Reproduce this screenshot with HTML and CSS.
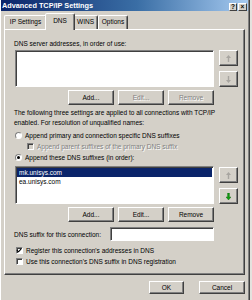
FILE: index.html
```html
<!DOCTYPE html>
<html>
<head>
<meta charset="utf-8">
<link rel="stylesheet" href="styles.css">
</head>
<body>
<div class="window">
  <div class="titlebar">
    <span class="title">Advanced TCP/IP Settings</span>
    <div class="tb-btns">
      <span class="tb-btn help">?</span>
      <span class="tb-btn close">×</span>
    </div>
  </div>

  <div class="tabs">
    <div class="tab t1">IP Settings</div>
    <div class="tab active">DNS</div>
    <div class="tab t3">WINS</div>
    <div class="tab t4">Options</div>
  </div>

  <div class="panel">
    <div class="label l1">DNS server addresses, in order of use:</div>
    <div class="listrow r1">
      <div class="listbox lb1"></div>
      <div class="arrows a1">
        <div class="abtn"><svg class="arrow dis" viewBox="0 0 5 7" width="5" height="7"><path d="M2.5 0 L5 3 H3.2 V7 H1.8 V3 H0 Z"/></svg></div>
        <div class="abtn down"><svg class="arrow dis" viewBox="0 0 5 7" width="5" height="7"><path d="M2.5 7 L5 4 H3.2 V0 H1.8 V4 H0 Z"/></svg></div>
      </div>
    </div>
    <div class="btnrow b1">
      <div class="btn">Add...</div>
      <div class="btn disabled">Edit...</div>
      <div class="btn disabled">Remove</div>
    </div>

    <div class="para">The following three settings are applied to all connections with TCP/IP<br>enabled. For resolution of unqualified names:</div>

    <div class="opt o1"><span class="radio"></span><span>Append primary and connection specific DNS suffixes</span></div>
    <div class="opt o2 disabled"><span class="check dis"></span><span>Append parent suffixes of the primary DNS suffix</span></div>
    <div class="opt o3"><span class="radio on"></span><span>Append these DNS suffixes (in order):</span></div>

    <div class="listrow r2">
      <div class="listbox lb2">
        <div class="item sel">mk.unisys.com</div>
        <div class="item">ea.unisys.com</div>
      </div>
      <div class="arrows a2">
        <div class="abtn"><svg class="arrow dis" viewBox="0 0 5 7" width="5" height="7"><path d="M2.5 0 L5 3 H3.2 V7 H1.8 V3 H0 Z"/></svg></div>
        <div class="abtn down"><svg class="arrow green" viewBox="0 0 5 7" width="5" height="7"><path d="M2.5 7 L5 4 H3.4 V0 H1.6 V4 H0 Z"/></svg></div>
      </div>
    </div>
    <div class="btnrow b2">
      <div class="btn">Add...</div>
      <div class="btn">Edit...</div>
      <div class="btn">Remove</div>
    </div>

    <div class="suffixrow">
      <span>DNS suffix for this connection:</span>
      <div class="input"></div>
    </div>

    <div class="opt o4"><span class="check on"><svg viewBox="0 0 7 7" width="7" height="7"><path d="M1 3 L3 5 L6 1.5" fill="none" stroke="#000" stroke-width="1.3"/></svg></span><span>Register this connection's addresses in DNS</span></div>
    <div class="opt o5"><span class="check"></span><span>Use this connection's DNS suffix in DNS registration</span></div>
  </div>

  <div class="footer">
    <div class="btn ok">OK</div>
    <div class="btn cancel">Cancel</div>
  </div>
</div>
</body>
</html>
```

FILE: styles.css
```css
* { box-sizing: border-box; }
html, body { margin: 0; padding: 0; }
body {
  width: 252px;
  height: 300px;
  overflow: hidden;
  background: #e4e2de;
  font-family: "Liberation Sans", Arial, sans-serif;
  font-size: 6.5px;
  color: #000;
}
.window {
  width: 250px;
  height: 300px;
  background: #d4d0c8;
  border-left: 1px solid #fff;
  border-right: 1px solid #404040;
  box-shadow: inset -1px 0 #808080;
}
.titlebar {
  height: 11px;
  margin-right: 1px;
  background: linear-gradient(to right, #0a246a, #3a6ea5 55%, #a6caf0);
  display: flex;
  align-items: center;
  justify-content: space-between;
  padding: 0 1px 0 1px;
}
.title {
  color: #fff;
  font-weight: bold;
  font-size: 7.3px;
  white-space: nowrap;
}
.tb-btns { display: flex; gap: 1px; margin-top: 2px; }
.tb-btn {
  height: 8px;
  background: #d4d0c8;
  border: 1px solid;
  border-color: #fff #404040 #404040 #fff;
  font-weight: bold;
  font-size: 6.5px;
  line-height: 6px;
  text-align: center;
  color: #000;
}
.help { width: 8px; }
.close { width: 9px; }

.tabs {
  display: flex;
  align-items: flex-end;
  height: 18px;
  margin-left: 3px;
  white-space: nowrap;
}
.tab {
  height: 14px;
  line-height: 12px;
  text-align: center;
  border: 1px solid;
  border-bottom: none;
  border-color: #fff #404040 transparent #fff;
  box-shadow: inset -1px 0 #808080;
  border-radius: 2px 2px 0 0;
}
.t1 { width: 43px; }
.active {
  width: 30px;
  height: 17px;
  margin: 0 -2px -1px -2px;
  background: #d4d0c8;
  position: relative;
  z-index: 1;
  line-height: 13px;
}
.t3 { width: 25px; }
.t4 { width: 30px; }

.panel {
  margin-left: 3px;
  width: 241px;
  height: 246px;
  border: 1px solid;
  border-color: #fff #404040 #404040 #fff;
  box-shadow: inset -1px -1px #808080;
  padding-left: 9px;
  display: flex;
  flex-direction: column;
}
.label, .para, .opt, .suffixrow { white-space: nowrap; }
.l1 { margin-top: 9px; line-height: 9px; }

.listrow {
  display: grid;
  grid-template-columns: 200px 19px;
  column-gap: 5px;
}
.r1 { margin-top: 2px; height: 37px; }
.r2 { margin-top: 3px; height: 38px; }
.listbox {
  background: #fff;
  border: 1px solid;
  border-color: #808080 #fff #fff #808080;
  box-shadow: inset 1px 1px #404040;
  padding: 1px 1px 1px 1px;
  margin-left: 1px;
}
.item {
  height: 9px;
  line-height: 9px;
  padding-left: 2px;
}
.item.sel { background: #0a246a; color: #fff; }

.arrows { display: flex; flex-direction: column; gap: 5px; }
.a2 { padding-top: 1px; }
.abtn {
  height: 16px;
  background: #d4d0c8;
  border: 1px solid;
  border-color: #fff #404040 #404040 #fff;
  box-shadow: inset -1px -1px #808080;
  display: flex;
  align-items: center;
  justify-content: center;
}
.arrow.dis path { fill: #a8a5a0; }
.arrow.green path { fill: #10a010; stroke: #0a5a0a; stroke-width: 0.4; }

.btnrow {
  display: flex;
  gap: 4px;
  width: 200px;
  justify-content: flex-end;
}
.b1 { margin-top: 3px; }
.b2 { margin-top: 3px; }
.btn {
  height: 15px;
  width: 46px;
  background: #d4d0c8;
  border: 1px solid;
  border-color: #fff #404040 #404040 #fff;
  box-shadow: inset -1px -1px #808080;
  text-align: center;
  line-height: 13px;
  white-space: nowrap;
}
.btn.disabled { color: #808080; text-shadow: 1px 1px #fff; }

.para { margin-top: 3px; line-height: 10px; }

.opt {
  display: flex;
  align-items: center;
  height: 11px;
  gap: 3px;
}
.o1 { margin-top: 2px; margin-left: 1px; }
.o2 { margin-left: 13px; }
.o3 { margin-left: 1px; }
.o4 { margin-top: 4px; margin-left: 2px; }
.o5 { margin-left: 2px; }
.opt.disabled { color: #808080; text-shadow: 1px 1px #fff; }

.radio {
  width: 7px;
  height: 7px;
  border-radius: 50%;
  background: #fff;
  border: 1px solid;
  border-color: #808080 #fff #fff #808080;
  flex: none;
  display: flex;
  align-items: center;
  justify-content: center;
}
.radio.on::after {
  content: "";
  width: 3px;
  height: 3px;
  border-radius: 50%;
  background: #000;
}
.check {
  width: 7px;
  height: 7px;
  background: #fff;
  border: 1px solid;
  border-color: #808080 #fff #fff #808080;
  box-shadow: inset 1px 1px #404040;
  flex: none;
  display: flex;
}
.check svg { margin: -1px 0 0 -1px; }
.check.dis { background: #d4d0c8; }

.suffixrow {
  margin-top: 5px;
  width: 200px;
  display: flex;
  align-items: center;
  justify-content: space-between;
  height: 14px;
}
.input {
  width: 104px;
  height: 14px;
  background: #fff;
  border: 1px solid;
  border-color: #808080 #fff #fff #808080;
  box-shadow: inset 1px 1px #404040;
}

.footer {
  display: flex;
  justify-content: flex-end;
  gap: 15px;
  margin-top: 6px;
  padding-right: 4px;
}
.btn.ok { width: 35px; height: 13px; line-height: 11px; }
.btn.cancel { width: 46px; height: 13px; line-height: 11px; }
```
